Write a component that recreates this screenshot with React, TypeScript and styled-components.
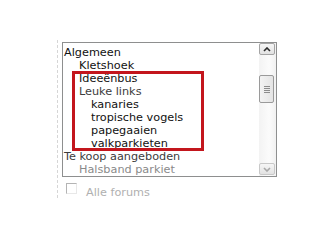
import React from 'react';
import styled, { createGlobalStyle } from 'styled-components';

const GlobalStyle = createGlobalStyle`
  html, body {
    margin: 0;
    padding: 0;
    background: #ffffff;
  }
  body {
    font-family: "DejaVu Sans", Verdana, sans-serif;
  }
`;

const StyledFrame = styled.div`
  margin: 40px 0 0 57px;
  width: 226px;
  height: 158px;
  padding: 2px 0 0 4px;
  box-sizing: border-box;
  border-left: 1px dashed #d6d6d6;
`;

const StyledListBox = styled.div`
  position: relative;
  display: grid;
  grid-template-columns: 1fr 17px;
  width: 215px;
  height: 135px;
  box-sizing: border-box;
  border: 1px solid #8e8f8f;
  background: #ffffff;
`;

const StyledItems = styled.ul`
  margin: 0;
  padding: 3px 0 0 0;
  list-style: none;
  overflow: hidden;
  font-size: 11.25px;
  line-height: 13px;
`;

const StyledItem = styled.li<{ $level: number; $tone: string }>`
  padding-left: ${p => 1 + (p.$level === 1 ? 15 : p.$level === 2 ? 27 : 0)}px;
  color: ${p => p.$tone};
  white-space: nowrap;
`;

const StyledMarker = styled.div`
  position: absolute;
  left: 9px;
  top: 28px;
  width: 132px;
  height: 80px;
  box-sizing: border-box;
  border: 3px solid #c3161d;
  pointer-events: none;
`;

const StyledScrollBar = styled.div`
  display: flex;
  flex-direction: column;
  padding: 0 1px 1px 0;
  background: linear-gradient(to right, #f3f3f3, #fbfbfb 60%, #f1f1f1);
`;

const StyledArrowBtn = styled.div<{ $dim?: boolean }>`
  height: 12px;
  box-sizing: border-box;
  border: 1px solid ${p => (p.$dim ? '#c8c8c8' : '#a4a4a4')};
  border-radius: 2px;
  background: linear-gradient(to bottom, #f6f6f6, #e2e2e2);
  display: flex;
  align-items: center;
  justify-content: center;
  color: ${p => (p.$dim ? '#a8a8a8' : '#2a2a2a')};
`;

const StyledTrack = styled.div<{ $grow?: boolean }>`
  flex: ${p => (p.$grow ? 1 : '0 0 20px')};
`;

const StyledThumb = styled.div`
  height: 28px;
  width: 15px;
  box-sizing: border-box;
  border: 1px solid #9a9a9a;
  border-radius: 2px;
  background: linear-gradient(to right, #f3f3f3, #e4e4e4);
  display: flex;
  flex-direction: column;
  align-items: center;
  justify-content: center;
  gap: 1px;
`;

const StyledGrip = styled.span`
  display: block;
  width: 6px;
  height: 1px;
  background: #8c8c8c;
`;

const StyledOptionRow = styled.label`
  display: flex;
  align-items: flex-start;
  gap: 9px;
  margin: 6px 0 0 4px;
  font-size: 11.25px;
  line-height: 13px;
  color: #b0b0b0;
`;

const StyledCheck = styled.span`
  display: inline-block;
  width: 11px;
  height: 11px;
  box-sizing: border-box;
  border-top: 1px solid #b4b4b4;
  border-left: 1px solid #b4b4b4;
  border-right: 1px solid #e8e8e8;
  border-bottom: 1px solid #e8e8e8;
`;

const StyledOptionText = styled.span`
  padding-top: 3px;
`;

const Chevron: React.FC<{ down?: boolean }> = ({ down }) => (
  <svg width="8" height="5" viewBox="0 0 8 5">
    <path
      d={down ? 'M1 1 L4 4 L7 1' : 'M1 4 L4 1 L7 4'}
      fill="none"
      stroke="currentColor"
      strokeWidth="1.6"
    />
  </svg>
);

const items: { label: string; level: number; tone: string }[] = [
  { label: 'Algemeen', level: 0, tone: '#111111' },
  { label: 'Kletshoek', level: 1, tone: '#111111' },
  { label: 'Ideeënbus', level: 1, tone: '#111111' },
  { label: 'Leuke links', level: 1, tone: '#3c3c3c' },
  { label: 'kanaries', level: 2, tone: '#111111' },
  { label: 'tropische vogels', level: 2, tone: '#111111' },
  { label: 'papegaaien', level: 2, tone: '#111111' },
  { label: 'valkparkieten', level: 2, tone: '#111111' },
  { label: 'Te koop aangeboden', level: 0, tone: '#3c3c3c' },
  { label: 'Halsband parkiet', level: 1, tone: '#8a8a8a' },
];

const App: React.FC = () => {
  return (
    <>
      <GlobalStyle />
      <StyledFrame>
        <StyledListBox>
          <StyledItems>
            {items.map(item => (
              <StyledItem key={item.label} $level={item.level} $tone={item.tone}>
                {item.label}
              </StyledItem>
            ))}
          </StyledItems>
          <StyledScrollBar>
            <StyledArrowBtn>
              <Chevron />
            </StyledArrowBtn>
            <StyledTrack />
            <StyledThumb>
              <StyledGrip />
              <StyledGrip />
              <StyledGrip />
              <StyledGrip />
            </StyledThumb>
            <StyledTrack $grow />
            <StyledArrowBtn $dim>
              <Chevron down />
            </StyledArrowBtn>
          </StyledScrollBar>
          <StyledMarker />
        </StyledListBox>
        <StyledOptionRow>
          <StyledCheck />
          <StyledOptionText>Alle forums</StyledOptionText>
        </StyledOptionRow>
      </StyledFrame>
    </>
  );
};

export default App;
